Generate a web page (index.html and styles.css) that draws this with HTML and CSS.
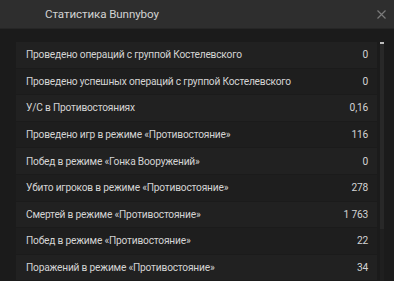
FILE: index.html
```html
<!DOCTYPE html>
<html lang="ru">
<head>
<meta charset="utf-8">
<link rel="stylesheet" href="styles.css">
</head>
<body>
<div class="win">
  <div class="header">
    <span class="title">Статистика Bunnyboy</span>
    <svg class="close" width="9" height="9" viewBox="0 0 9 9"><path d="M0.5 0.5 L8.5 8.5 M8.5 0.5 L0.5 8.5" stroke="#7a7a7a" stroke-width="1.2"/></svg>
  </div>
  <div class="body">
    <div class="list">
      <div class="row a"><span>Проведено операций с группой Костелевского</span><span>0</span></div>
      <div class="row b"><span>Проведено успешных операций с группой Костелевского</span><span>0</span></div>
      <div class="row a"><span>У/С в Противостояниях</span><span>0,16</span></div>
      <div class="row b"><span>Проведено игр в режиме «Противостояние»</span><span>116</span></div>
      <div class="row a"><span>Побед в режиме «Гонка Вооружений»</span><span>0</span></div>
      <div class="row b"><span>Убито игроков в режиме «Противостояние»</span><span>278</span></div>
      <div class="row a"><span>Смертей в режиме «Противостояние»</span><span>1 763</span></div>
      <div class="row b"><span>Побед в режиме «Противостояние»</span><span>22</span></div>
      <div class="row a"><span>Поражений в режиме «Противостояние»</span><span>34</span></div>
    </div>
    <div class="scroll"><div class="thumb"></div></div>
  </div>
</div>
</body>
</html>
```
FILE: styles.css
```css
html, body { margin: 0; padding: 0; }
body { background: #1b1b1b; font-family: Roboto, "Noto Sans", sans-serif; overflow: hidden; }
.win { width: 394px; height: 281px; display: flex; flex-direction: column; }
.header { height: 28px; background: #2e2e2e; border-bottom: 1px solid #262626; display: flex; align-items: center; justify-content: space-between; padding: 0 8px 0 45px; flex-shrink: 0; }
.title { color: #d2d2d2; font-size: 11.6px; letter-spacing: -0.1px; }
.body { display: flex; padding: 13px 0 0 16px; gap: 3px; flex: 1; overflow: hidden; }
.list { width: 361px; display: flex; flex-direction: column; gap: 1px; }
.row { height: 25.6px; flex-shrink: 0; display: flex; align-items: center; justify-content: space-between; padding: 0 9px 0 10px; color: #d4d4d4; font-size: 10.2px; letter-spacing: -0.2px; }
.row.a { background: #212121; }
.row.b { background: #1e1e1e; }
.scroll { width: 4px; background: #1f1f1f; align-self: flex-start; height: 240px; }
.thumb { height: 185px; background: #282828; border-top: 2px solid #bdbdbd; }
```
